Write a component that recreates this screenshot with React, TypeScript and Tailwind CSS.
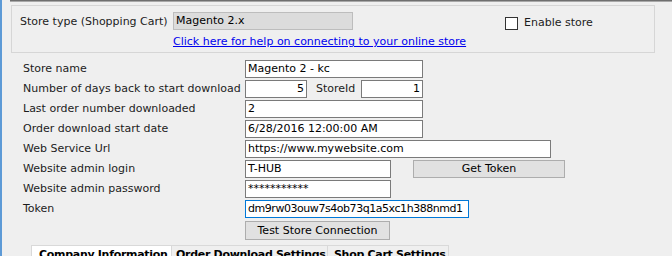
import React from "react";

const font = { fontFamily: '"DejaVu Sans", Verdana, sans-serif' };

function Label({ children }: { children: React.ReactNode }) {
  return <div className="w-[222px] shrink-0 leading-[18px] text-[#1c1c1c]">{children}</div>;
}

function Input({ value, w, right, blue, tight }: { value: string; w: string; right?: boolean; blue?: boolean; tight?: boolean }) {
  return (
    <div
      className={`${w} h-[18px] shrink-0 bg-white border ${blue ? "border-[#0078d7]" : "border-[#7a7a7a]"} px-[2px] leading-[16px] text-black overflow-hidden whitespace-nowrap ${right ? "text-right" : ""} ${tight ? "tracking-[-0.45px]" : ""}`}
    >
      {value}
    </div>
  );
}

export default function App() {
  return (
    <div
      className="w-[672px] h-[256px] overflow-hidden bg-[#efefef] relative border-l-2 border-[#5d9ad6] text-[11px]"
      style={font}
    >
      <div className="h-[1px] bg-[#6f6f6f] ml-[8px]" />
      <div className="h-[1px] bg-[#a8a8a8] ml-[8px]" />
      {/* group box */}
      <div className="ml-[9px] mt-[3px] w-[644px] h-[48px] border border-[#d6d6d6] flex flex-col pl-[8px] pt-[6px]">
        <div className="flex items-start">
          <div className="w-[153px] leading-[18px] mt-[1px] text-[#1c1c1c]">Store type (Shopping Cart)</div>
          <div className="w-[180px] h-[18px] bg-[#dcdcdc] border border-[#bdbdbd] px-[2px] leading-[15px] text-black">
            Magento 2.x
          </div>
          <div className="ml-[152px] mt-[5px] w-[13px] h-[13px] border border-[#333] bg-white" />
          <div className="ml-[6px] mt-[4px] leading-[14px] text-[#1c1c1c]">Enable store</div>
        </div>
        <div className="ml-[153px] mt-[2px] leading-[18px]">
          <span className="text-[#0000ee] underline">Click here for help on connecting to your online store</span>
        </div>
      </div>

      <div className="ml-[21px] mt-[7px] flex flex-col gap-[2px]">
        <div className="flex">
          <Label>Store name</Label>
          <Input value="Magento 2 - kc" w="w-[178px]" />
        </div>
        <div className="flex">
          <Label>Number of days back to start download</Label>
          <Input value="5" w="w-[62px]" right />
          <div className="ml-[9px] w-[45px] leading-[18px] text-[#1c1c1c]">StoreId</div>
          <Input value="1" w="w-[62px]" right />
        </div>
        <div className="flex">
          <Label>Last order number downloaded</Label>
          <Input value="2" w="w-[178px]" />
        </div>
        <div className="flex">
          <Label>Order download start date</Label>
          <Input value="6/28/2016 12:00:00 AM" w="w-[178px]" />
        </div>
        <div className="flex">
          <Label>Web Service Url</Label>
          <Input value="https://www.mywebsite.com" w="w-[306px]" />
        </div>
        <div className="flex">
          <Label>Website admin login</Label>
          <Input value="T-HUB" w="w-[146px]" />
          <div className="ml-[22px] w-[152px] h-[18px] bg-[#e1e1e1] border border-[#adadad] text-center leading-[16px] text-black">
            Get Token
          </div>
        </div>
        <div className="flex">
          <Label>Website admin password</Label>
          <Input value="***********" w="w-[146px]" />
        </div>
        <div className="flex">
          <Label>Token</Label>
          <Input value="dm9rw03ouw7s4ob73q1a5xc1h388nmd1" w="w-[224px]" blue tight />
        </div>
        <div className="flex mt-[1px]">
          <div className="w-[222px]" />
          <div className="w-[145px] h-[19px] bg-[#e1e1e1] border border-[#adadad] text-center leading-[17px] text-black">
            Test Store Connection
          </div>
        </div>
      </div>

      <div className="ml-[29px] mt-[5px] flex tracking-[-0.3px]">
        <div className="w-[141px] h-[14px] bg-white border border-[#d9d9d9] border-b-0 pl-[7px] pt-[2px] font-bold leading-[14px] text-black whitespace-nowrap">
          Company Information
        </div>
        <div className="w-[156px] h-[14px] border-t border-r border-[#d9d9d9] pl-[4px] pt-[2px] font-bold leading-[14px] text-black whitespace-nowrap overflow-hidden">
          Order Download Settings
        </div>
        <div className="w-[121px] h-[14px] border-t border-r border-[#d9d9d9] pl-[6px] pt-[2px] font-bold leading-[14px] text-black whitespace-nowrap overflow-hidden">
          Shop Cart Settings
        </div>
      </div>
    </div>
  );
}
